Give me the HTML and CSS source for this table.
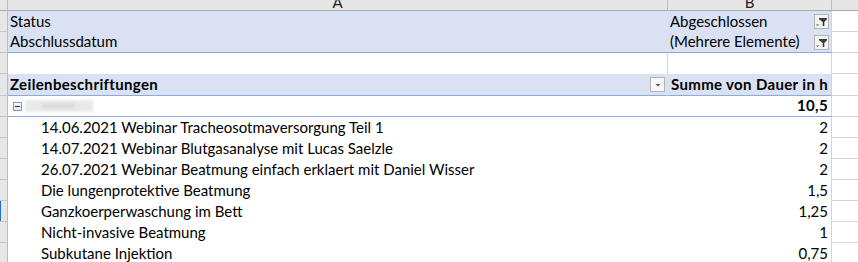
FILE: index.html
```html
<!DOCTYPE html>
<html lang="de">
<head>
<meta charset="utf-8">
<title>Pivot</title>
<link rel="stylesheet" href="styles.css">
</head>
<body>
<div class="sheet">
  <div class="row colhead">
    <div class="gut"></div>
    <div class="ch a">A</div>
    <div class="ch b">B</div>
    <div class="ch c"></div>
  </div>

  <div class="row">
    <div class="gut"></div>
    <div class="cell a band">Status</div>
    <div class="cell b band filter">Abgeschlossen
      <span class="fbtn"><svg width="13" height="13" viewBox="0 0 13 13"><path d="M4 3h8v1.2L9.3 7v4H7.7V7L4 4.2z" fill="#3c3c3c"/><path d="M1 9.5h3l-1.5 1.5z" fill="#555"/></svg></span>
    </div>
    <div class="cell c"></div>
  </div>

  <div class="row">
    <div class="gut"></div>
    <div class="cell a band bandend">Abschlussdatum</div>
    <div class="cell b band bandend filter">(Mehrere Elemente)
      <span class="fbtn"><svg width="13" height="13" viewBox="0 0 13 13"><path d="M4 3h8v1.2L9.3 7v4H7.7V7L4 4.2z" fill="#3c3c3c"/><path d="M1 9.5h3l-1.5 1.5z" fill="#555"/></svg></span>
    </div>
    <div class="cell c"></div>
  </div>

  <div class="row">
    <div class="gut"></div>
    <div class="cell a grid"></div>
    <div class="cell b grid"></div>
    <div class="cell c"></div>
  </div>

  <div class="row tall">
    <div class="gut"></div>
    <div class="cell a band bandend bold hdr">Zeilenbeschriftungen
      <span class="dbtn"><svg width="12" height="12" viewBox="0 0 12 12"><path d="M3.5 5h5L6 7.5z" fill="#555"/></svg></span>
    </div>
    <div class="cell b band bandend bold num">Summe von Dauer in h</div>
    <div class="cell c"></div>
  </div>

  <div class="row">
    <div class="gut"></div>
    <div class="cell a bandend group"><span class="minus"></span><span class="blur"></span></div>
    <div class="cell b bandend bold num">10,5</div>
    <div class="cell c"></div>
  </div>

  <div class="row">
    <div class="gut"></div>
    <div class="cell a item">14.06.2021 Webinar Tracheosotmaversorgung Teil 1</div>
    <div class="cell b num">2</div>
    <div class="cell c"></div>
  </div>
  <div class="row">
    <div class="gut"></div>
    <div class="cell a item">14.07.2021 Webinar Blutgasanalyse mit Lucas Saelzle</div>
    <div class="cell b num">2</div>
    <div class="cell c"></div>
  </div>
  <div class="row">
    <div class="gut"></div>
    <div class="cell a item">26.07.2021 Webinar Beatmung einfach erklaert mit Daniel Wisser</div>
    <div class="cell b num">2</div>
    <div class="cell c"></div>
  </div>
  <div class="row">
    <div class="gut"></div>
    <div class="cell a item">Die lungenprotektive Beatmung</div>
    <div class="cell b num">1,5</div>
    <div class="cell c"></div>
  </div>
  <div class="row">
    <div class="gut mark"></div>
    <div class="cell a item">Ganzkoerperwaschung im Bett</div>
    <div class="cell b num">1,25</div>
    <div class="cell c"></div>
  </div>
  <div class="row">
    <div class="gut"></div>
    <div class="cell a item">Nicht-invasive Beatmung</div>
    <div class="cell b num">1</div>
    <div class="cell c"></div>
  </div>
  <div class="row">
    <div class="gut"></div>
    <div class="cell a item">Subkutane Injektion</div>
    <div class="cell b num">0,75</div>
    <div class="cell c"></div>
  </div>
</div>
</body>
</html>
```

FILE: styles.css
```css
* { box-sizing: border-box; }
html, body { margin: 0; padding: 0; background: #fff; }
body {
  font-family: "Lato", "Liberation Sans", sans-serif;
  font-size: 15px;
  color: #000;
  width: 858px;
  height: 262px;
  overflow: hidden;
}
.sheet { display: flex; flex-direction: column; }
.row {
  display: grid;
  grid-template-columns: 8px 660px 164px 26px;
  height: 21px;
}
.row.tall { height: 22px; }
.gut {
  background: #e6e6e6;
  border-right: 1px solid #bcbcbc;
  border-bottom: 1px solid #c8c8c8;
}
.gut.mark { box-shadow: inset 2px 0 0 -1px #1f6fd0; }
.colhead { height: 11px; }
.colhead .gut { border-bottom: 1px solid #ababab; }
.ch {
  background: #e6e6e6;
  border-bottom: 1px solid #ababab;
  border-right: 1px solid #bcbcbc;
  text-align: center;
  font-size: 15px;
  line-height: 11px;
  color: #222;
  overflow: hidden;
}
.ch.a, .ch.b { line-height: 4px; }
.ch.c { border-right: none; }
.cell {
  display: flex;
  align-items: flex-end;
  padding: 0 3px 3px 2px;
  white-space: nowrap;
  position: relative;
  line-height: 16px;
  color: #000;
}
.cell.c { border-bottom: 1px solid #d4d4d4; }
.cell.grid { border-right: 1px solid #d4d4d4; }
.cell.b { border-right: 1px solid #d4d4d4; }
.cell.a.band { border-right: 1px solid #d9e1f2; }
.band { background: #d9e1f2; }
.bandend { border-bottom: 1px solid #8ea9db; }
.bold { font-weight: 700; letter-spacing: 0.35px; }
.num { justify-content: flex-end; }
.filter { justify-content: flex-start; }
.fbtn {
  position: absolute;
  right: 2px;
  top: 3px;
  width: 15px;
  height: 15px;
  border: 1px solid #b4b4b4;
  background: #f3f3f3;
  display: flex;
  align-items: center;
  justify-content: center;
}
.dbtn {
  position: absolute;
  right: 2px;
  top: 3px;
  width: 15px;
  height: 15px;
  border: 1px solid #b4b4b4;
  background: #f7f7f7;
  display: flex;
  align-items: center;
  justify-content: center;
}
.group { align-items: center; padding-bottom: 0; padding-left: 5px; gap: 3px; }
.minus {
  width: 9px;
  height: 9px;
  border: 1px solid #8a9bb8;
  background: linear-gradient(#f4f6fa, #dfe5ef);
  position: relative;
}
.minus::after {
  content: "";
  position: absolute;
  left: 1px; right: 1px; top: 3px;
  height: 1px;
  background: #333;
}
.blur {
  width: 68px;
  height: 12px;
  background: #e9e9e9;
  filter: blur(1.5px);
  position: relative;
}
.blur::after {
  content: "";
  position: absolute;
  left: 18px; right: 18px; top: 4px; height: 4px;
  background: repeating-linear-gradient(90deg, #b8b8b8 0 1px, transparent 1px 3px);
}
.item { padding-left: 33px; }
```
